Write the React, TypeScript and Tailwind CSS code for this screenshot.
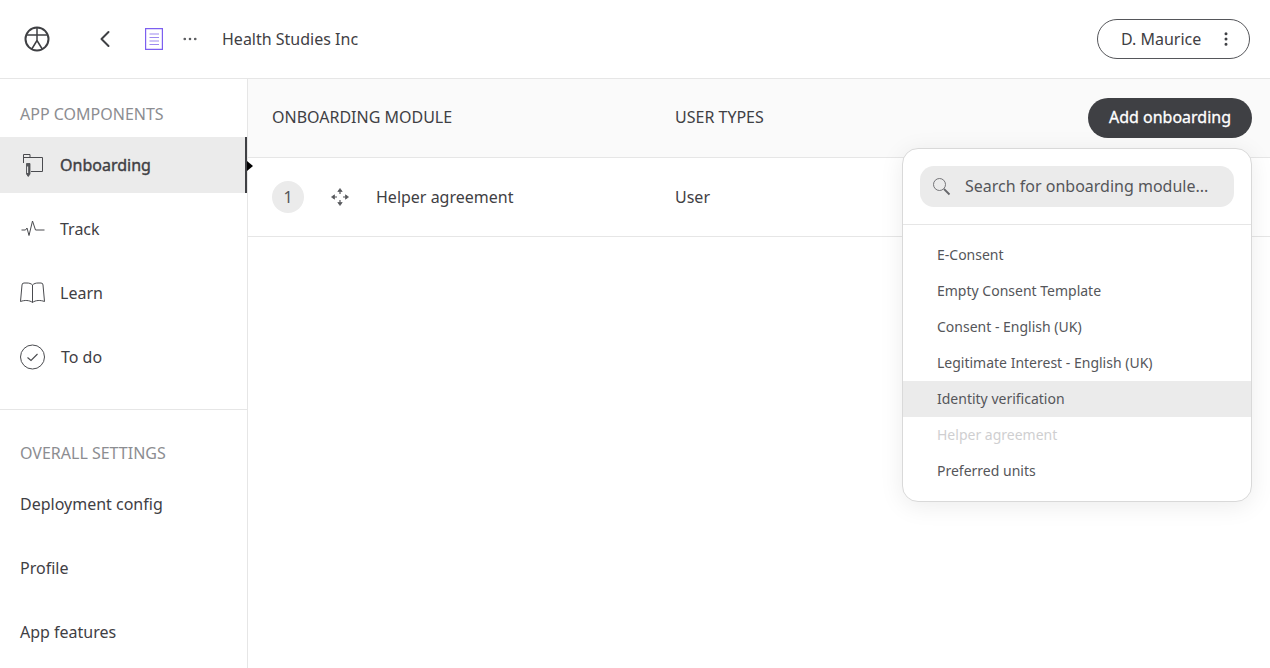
import type { ReactNode } from 'react';
import { ChevronLeft, MoreHorizontal, MoreVertical } from 'lucide-react';

const moduleOptions = [
  { label: 'E-Consent' },
  { label: 'Empty Consent Template' },
  { label: 'Consent - English (UK)' },
  { label: 'Legitimate Interest - English (UK)' },
  { label: 'Identity verification', hover: true },
  { label: 'Helper agreement', disabled: true },
  { label: 'Preferred units' },
];

function LogoIcon() {
  return (
    <svg width="26" height="26" viewBox="0 0 26 26" fill="none" stroke="#3f4044" strokeWidth="2">
      <circle cx="13" cy="13" r="11.5" />
      <path d="M2.500 9h21M13 1.500v13M13 14.500 7.500 23.500M13 14.500l5.500 9" strokeWidth="1.500" />
    </svg>
  );
}

function DocIcon() {
  return (
    <svg width="18" height="22" viewBox="0 0 18 22" fill="none" stroke="#7c5ff0" strokeWidth="1.200">
      <path d="M.6.6h16.800v20.800H.6z" />
      <path d="M4.500 6h9.500M4.500 9.500h9.500M4.500 13h9.500M4.500 16.500h9.500" stroke="#9d8af0" />
    </svg>
  );
}

function OnboardingIcon() {
  return (
    <svg width="20" height="23" viewBox="0 0 20 23" fill="none" stroke="#4a4b4f" strokeWidth="1">
      <path d="M.5 9V.5h6.500v3H19.500v14H8" />
      <path d="M.5 3.500H7" />
      <path d="M3.500 9.500h3.500v10.500l-1.750 2.500L3.500 20z" fill="#55565a" strokeWidth="0.8" />
      <path d="M4.600 12.500v6.500" stroke="#ebebeb" strokeWidth="1.100" />
    </svg>
  );
}

function TrackIcon() {
  return (
    <svg width="24" height="18" viewBox="0 0 24 18" fill="none" stroke="#4a4b4f" strokeWidth="1">
      <path d="M.5 10h4l1.500-2 2 7.500L11.500 1l3 9h9" />
    </svg>
  );
}

function LearnIcon() {
  return (
    <svg width="26" height="22" viewBox="0 0 26 22" fill="none" stroke="#4a4b4f" strokeWidth="1">
      <path d="M12.500 3C11 1.500 9 1 7 1H4Q2 1 2 3L.5 19.500C4.500 18 9.500 18 12.500 20.500 15.500 18 20.500 18 24.500 19.500L23 3Q23 1 21 1H18C16 1 14 1.500 12.500 3z" />
      <path d="M12.500 3V20.500" />
    </svg>
  );
}

function TodoIcon() {
  return (
    <svg width="26" height="26" viewBox="0 0 26 26" fill="none" stroke="#4a4b4f" strokeWidth="1">
      <circle cx="12.500" cy="13" r="12" />
      <path d="M7.500 13.500l3.500 3L17.500 10" strokeWidth="1.100" />
    </svg>
  );
}

function MoveIcon() {
  return (
    <svg width="20" height="20" viewBox="0 0 20 20" fill="#55565a" stroke="#55565a" strokeWidth="0.700">
      <path d="M10 1.500 7.800 4.500h4.400zM10 18.500l-2.200-3h4.400zM1.500 10l3-2.200v4.400zM18.500 10l-3-2.200v4.400z" />
      <path d="M10 4.500v2.500M10 13v2.500M4.500 10H7M13 10h2.500" fill="none" strokeWidth="1.200" />
    </svg>
  );
}

function SearchIcon() {
  return (
    <svg width="19" height="19" viewBox="0 0 19 19" fill="none" stroke="#66676b" strokeWidth="0.900">
      <circle cx="7.500" cy="7.500" r="6" />
      <path d="M12 12l5.500 5.500" strokeWidth="1.800" />
    </svg>
  );
}

function NavItem({ icon, label, active, gap }: { icon: ReactNode; label: string; active?: boolean; gap?: string }) {
  return (
    <div className={`flex h-14 items-center pl-5 ${active ? 'border-r-2 border-[#3f4044] bg-[#ebebeb] [-webkit-text-stroke:0.4px_#3f4044]' : ''}`}>
      <div className="flex w-[26px] justify-center">{icon}</div>
      <span className={`${gap ?? 'ml-[14px]'} text-[#3f4044]`}>{label}</span>
    </div>
  );
}

export default function App() {
  return (
    <div className="relative flex h-[668px] w-[1270px] flex-col overflow-hidden bg-white font-['Noto_Sans',sans-serif] text-base text-[#3f4044]">
      <header className="flex h-[79px] shrink-0 items-center border-b border-[#e6e6e6] pr-5 pl-6">
        <LogoIcon />
        <ChevronLeft className="ml-[41px]" size={28} strokeWidth={1.7} color="#3f4044" />
        <div className="ml-[26px]"><DocIcon /></div>
        <MoreHorizontal className="ml-[18px]" size={18} strokeWidth={1.5} color="#55565a" />
        <span className="ml-[23px]">Health Studies Inc</span>
        <div className="ml-auto flex h-10 w-[153px] items-center justify-between rounded-[20px] border border-[#55565a] pr-[14px] pl-[23px]">
          <span>D. Maurice</span>
          <MoreVertical size={18} strokeWidth={2} color="#3f4044" />
        </div>
      </header>

      <div className="flex min-h-0 flex-1">
        <aside className="w-[248px] shrink-0 border-r border-[#e6e6e6]">
          <div className="pt-[23px] pb-[11px] pl-5 leading-[24px] text-[#8c8d91]">APP COMPONENTS</div>
          <div className="flex flex-col gap-2">
            <NavItem icon={<OnboardingIcon />} label="Onboarding" active />
            <NavItem icon={<TrackIcon />} label="Track" />
            <NavItem icon={<LearnIcon />} label="Learn" />
            <NavItem icon={<TodoIcon />} label="To do" gap="ml-[15px]" />
          </div>
          <div className="mt-6 border-t border-[#e6e6e6] pt-[31px] pb-[11px] pl-5 leading-[24px] text-[#8c8d91]">OVERALL SETTINGS</div>
          <div className="flex flex-col gap-2 pl-5">
            <div className="flex h-14 items-center">Deployment config</div>
            <div className="flex h-14 items-center">Profile</div>
            <div className="flex h-14 items-center">App features</div>
          </div>
        </aside>

        <main className="min-w-0 flex-1">
          <div className="flex h-[79px] items-center border-b border-[#e6e6e6] bg-[#fafafa] pr-[18px] pl-6">
            <span className="w-[403px] pb-[2px]">ONBOARDING MODULE</span>
            <span className="pb-[2px]">USER TYPES</span>
            <button className="ml-auto flex h-10 w-[164px] items-center justify-center rounded-[20px] bg-[#3f4044] pb-[2px] text-white [-webkit-text-stroke:0.3px_#ffffff]">
              Add onboarding
            </button>
          </div>
          <div className="flex h-[79px] items-center border-b border-[#e6e6e6] pl-6">
            <div className="flex h-8 w-8 items-center justify-center rounded-full bg-[#ebebeb] text-[#55565a]">1</div>
            <div className="ml-[26px]"><MoveIcon /></div>
            <span className="ml-[26px] w-[299px]">Helper agreement</span>
            <span>User</span>
          </div>
        </main>
      </div>

      {/* pointer on the active nav edge */}
      <div className="absolute top-[161px] left-[247px] h-0 w-0 border-y-[5px] border-l-[6px] border-y-transparent border-l-black" />

      {/* dropdown over the table */}
      <div className="absolute top-[148px] left-[902px] w-[350px] rounded-2xl border border-[#d9d9d9] bg-white pb-3 shadow-[0_4px_24px_rgba(0,0,0,0.08)]">
        <div className="border-b border-[#e6e6e6] px-[17px] pt-[17px] pb-[17px]">
          <div className="flex h-[41px] items-center rounded-[14px] bg-[#ebebeb] pl-3 text-[#55565a]">
            <SearchIcon />
            <span className="ml-[14px] pb-px">Search for onboarding module...</span>
          </div>
        </div>
        <ul className="pt-3 text-sm text-[#55565a]">
          {moduleOptions.map((option) => (
            <li
              key={option.label}
              className={`flex h-9 items-center pl-[34px] ${option.hover ? 'bg-[#ebebeb]' : ''} ${option.disabled ? 'text-[#cfcfd1]' : ''}`}
            >
              {option.label}
            </li>
          ))}
        </ul>
      </div>
    </div>
  );
}
